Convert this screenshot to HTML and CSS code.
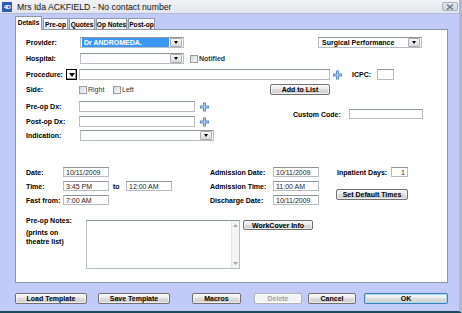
FILE: index.html
```html
<!DOCTYPE html>
<html>
<head>
<meta charset="utf-8">
<link rel="stylesheet" href="styles.css">
</head>
<body>
<div class="window">
  <div class="titlebar">
    <div class="app-icon">4D</div>
    <div class="title">Mrs Ida ACKFIELD - No contact number</div>
    <div class="close-btn"><svg width="8" height="6" viewBox="0 0 8 6"><path d="M1 0.5L7 5.5M7 0.5L1 5.5" stroke="#6b7280" stroke-width="1.4" fill="none"/></svg></div>
  </div>
  <div class="client">
    <div class="tabs">
      <div class="tab active t-details">Details</div>
      <div class="tab t-preop">Pre-op</div>
      <div class="tab t-quotes">Quotes</div>
      <div class="tab t-opnotes">Op Notes</div>
      <div class="tab t-postop">Post-op</div>
    </div>
    <div class="panel">
      <div class="row r-provider">
        <div class="label w54">Provider:</div>
        <div class="select w104">
          <div class="sel-value hl">Dr ANDROMEDA.</div>
          <div class="sel-arrow"><span class="tri"></span></div>
        </div>
        <div class="select w104 ml134">
          <div class="sel-value bold">Surgical Performance</div>
          <div class="sel-arrow"><span class="tri"></span></div>
        </div>
      </div>
      <div class="row r-hospital">
        <div class="label w54">Hospital:</div>
        <div class="select w104">
          <div class="sel-value"></div>
          <div class="sel-arrow"><span class="tri"></span></div>
        </div>
        <div class="cb ml6"></div>
        <div class="cb-text bold">Notified</div>
      </div>
      <div class="row r-procedure">
        <div class="label w40">Procedure:</div>
        <div class="dd-btn"><span class="tri"></span></div>
        <div class="field w251 ml2"></div>
        <svg class="plus ml3" width="9" height="10" viewBox="0 0 9 10"><path d="M3 0.5h3v3h3v3h-3v3h-3v-3h-3v-3h3z" fill="#5b8ccc"/><path d="M4 1.5h1v3h3v1h-3v3h-1v-3h-3v-1h3z" fill="#b5cff0"/></svg>
        <div class="label ml10 w25">ICPC:</div>
        <div class="field w17"></div>
      </div>
      <div class="row r-side">
        <div class="label w53">Side:</div>
        <div class="cb"></div>
        <div class="cb-text w25">Right</div>
        <div class="cb"></div>
        <div class="cb-text w148">Left</div>
        <div class="btn w60">Add to List</div>
      </div>
      <div class="dx-block">
        <div class="dx-left">
          <div class="row">
            <div class="label w53">Pre-op Dx:</div>
            <div class="field w116"></div>
            <svg class="plus ml5" width="9" height="10" viewBox="0 0 9 10"><path d="M3 0.5h3v3h3v3h-3v3h-3v-3h-3v-3h3z" fill="#5b8ccc"/><path d="M4 1.5h1v3h3v1h-3v3h-1v-3h-3v-1h3z" fill="#b5cff0"/></svg>
          </div>
          <div class="row mt4">
            <div class="label w53">Post-op Dx:</div>
            <div class="field w116"></div>
            <svg class="plus ml5" width="9" height="10" viewBox="0 0 9 10"><path d="M3 0.5h3v3h3v3h-3v3h-3v-3h-3v-3h3z" fill="#5b8ccc"/><path d="M4 1.5h1v3h3v1h-3v3h-1v-3h-3v-1h3z" fill="#b5cff0"/></svg>
          </div>
          <div class="row mt3">
            <div class="label w54">Indication:</div>
            <div class="select w134">
              <div class="sel-value"></div>
              <div class="sel-arrow"><span class="tri"></span></div>
            </div>
          </div>
        </div>
        <div class="custom">
          <div class="label w56">Custom Code:</div>
          <div class="field w74 h10"></div>
        </div>
      </div>
      <div class="dates">
        <div class="dcol c1">
          <div class="drow"><div class="label w37">Date:</div><div class="field w46 h10">10/11/2009</div></div>
          <div class="drow"><div class="label w37">Time:</div><div class="field w46 h10">3:45 PM</div><div class="label to">to</div><div class="field w46 h10">12:00 AM</div></div>
          <div class="drow"><div class="label w37">Fast from:</div><div class="field w46 h10">7:00 AM</div></div>
        </div>
        <div class="dcol c2">
          <div class="drow"><div class="label w63">Admission Date:</div><div class="field w46 h10">10/11/2009</div></div>
          <div class="drow"><div class="label w63">Admission Time:</div><div class="field w46 h10">11:00 AM</div></div>
          <div class="drow"><div class="label w63">Discharge Date:</div><div class="field w46 h10">10/11/2009</div></div>
        </div>
        <div class="dcol c3">
          <div class="drow"><div class="label w54">Inpatient Days:</div><div class="field w17 h10 right">1</div></div>
          <div class="btn w72 sdt">Set Default Times</div>
        </div>
      </div>
      <div class="notes-block">
        <div class="notes-label">
          <div class="label nl1">Pre-op Notes:</div>
          <div class="label">(prints on</div>
          <div class="label">theatre list)</div>
        </div>
        <div class="notes">
          <div class="notes-text"></div>
          <div class="sb">
            <svg width="5" height="3" viewBox="0 0 5 3"><path d="M0 3L2.5 0L5 3z" fill="#a8a8a8"/></svg>
            <svg width="5" height="3" viewBox="0 0 5 3"><path d="M0 0L2.5 3L5 0z" fill="#a8a8a8"/></svg>
          </div>
        </div>
        <div class="btn w70 wc">WorkCover Info</div>
      </div>
    </div>
    <div class="footer">
      <div class="btn b-load">Load Template</div>
      <div class="btn b-save">Save Template</div>
      <div class="btn b-macros">Macros</div>
      <div class="btn b-delete disabled">Delete</div>
      <div class="btn b-cancel">Cancel</div>
      <div class="btn b-ok default">OK</div>
    </div>
  </div>
</div>
</body>
</html>
```
FILE: styles.css
```css
* { box-sizing: border-box; }
html, body { margin: 0; padding: 0; }
body {
  width: 462px; height: 313px; overflow: hidden;
  font-family: "Liberation Sans", Arial, sans-serif;
  font-size: 7px; color: #000;
  background: #c3cbf7;
}
.window {
  width: 462px; height: 313px;
  display: flex; flex-direction: column;
  background: #c2caf8;
  border-right: 3px solid #b0b7d3;
  border-bottom: 2px solid #1d4a5b;
}
.titlebar {
  height: 14px; flex: none;
  display: flex; align-items: center;
  background: linear-gradient(#f1f2f5, #e2e5eb);
  border-bottom: 1px solid #b3bbdc;
  padding-left: 2px;
}
.app-icon {
  width: 10px; height: 10px;
  background: #2a5db8; color: #fff;
  font-size: 6px; font-weight: bold; line-height: 10px;
  text-align: center; letter-spacing: -0.5px;
}
.title { margin-left: 5px; font-size: 8.7px; color: #111; }
.close-btn {
  margin-left: auto; margin-right: 1px;
  width: 16px; height: 9px;
  border: 1px solid #a9b0bd; border-radius: 2px;
  background: linear-gradient(#e3e7ee, #cfd5df);
  display: flex; align-items: center; justify-content: center;
}
.client { padding-left: 15px; flex: 1; display: flex; flex-direction: column; }
.tabs { height: 15px; display: flex; align-items: flex-end; flex: none; }
.tab {
  height: 11px; margin-right: 1px;
  border: 1px solid #8e99aa; border-bottom: none;
  background: linear-gradient(#ffffff, #e9ebef);
  font-weight: bold; font-size: 6.6px; white-space: nowrap;
  display: flex; align-items: center; justify-content: center;
  border-radius: 1px 1px 0 0;
}
.tab.active {
  height: 14px; margin-bottom: -1px; position: relative; z-index: 1;
  background: #fff; padding-bottom: 2px;
}
.t-details { width: 27px; }
.t-preop { width: 25px; }
.t-quotes { width: 26px; }
.t-opnotes { width: 31px; }
.t-postop { width: 27px; }
.panel {
  width: 433px; height: 254px; flex: none;
  background: #fff; border: 1px solid #8d97a6;
  padding: 7px 0 0 10px;
}
.row { display: flex; align-items: center; height: 11px; }
.r-hospital { margin-top: 5px; }
.r-procedure { margin-top: 5px; }
.r-side { margin-top: 4px; }
.label { font-weight: bold; white-space: nowrap; flex: none; }
.bold { font-weight: bold; }
.w17 { width: 17px; } .w25 { width: 25px; } .w37 { width: 37px; } .w40 { width: 40px; }
.w46 { width: 46px; } .w53 { width: 53px; } .w54 { width: 54px; } .w56 { width: 56px; }
.w60 { width: 60px; } .w63 { width: 63px; } .w70 { width: 70px; } .w72 { width: 72px; }
.w74 { width: 74px; } .w104 { width: 104px; } .w116 { width: 116px; } .w134 { width: 134px; }
.w148 { width: 148px; } .w251 { width: 251px; }
.ml2 { margin-left: 2px; } .ml3 { margin-left: 3px; } .ml5 { margin-left: 5px; }
.ml6 { margin-left: 6px; } .ml10 { margin-left: 10px; } .ml134 { margin-left: 134px; }
.mt3 { margin-top: 3px; } .mt4 { margin-top: 4px; }
.h10 { height: 10px !important; }
.field {
  height: 11px; flex: none; background: #fff;
  border: 1px solid #b8bcc4; border-top-color: #8f939a;
  padding-left: 2px; display: flex; align-items: center;
  white-space: nowrap; color: #222;
}
.field.right { justify-content: flex-end; padding-right: 2px; }
.select {
  height: 11px; flex: none; display: flex; align-items: center;
  background: #fff; border: 1px solid #b8bcc4; border-top-color: #8f939a;
  padding: 0 1px;
}
.sel-value { flex: 1; height: 7px; line-height: 7px; padding-left: 2px; white-space: nowrap; }
.sel-value.hl { background: #3d98f5; color: #fff; font-weight: bold; height: 9px; line-height: 9px; margin-right: 1px; }
.sel-arrow {
  width: 12px; height: 9px; flex: none;
  border: 1px solid #a9acb2; border-radius: 1px;
  background: linear-gradient(#f7f7f7, #dadada);
  display: flex; align-items: center; justify-content: center;
}
.tri {
  width: 0; height: 0;
  border-left: 2.5px solid transparent; border-right: 2.5px solid transparent;
  border-top: 3px solid #000;
}
.dd-btn {
  width: 11px; height: 11px; flex: none;
  border: 1px solid #000; background: #fff;
  box-shadow: inset -1px -1px 0 #9a9a9a;
  display: flex; align-items: center; justify-content: center;
}
.dd-btn .tri { border-left-width: 3px; border-right-width: 3px; border-top-width: 4px; }
.plus { flex: none; display: block; }
.cb {
  width: 8px; height: 8px; flex: none;
  border: 1px solid #9a9da3;
  background: linear-gradient(135deg, #d8d9dc, #f7f7f8);
}
.cb-text { margin-left: 1px; white-space: nowrap; color: #333; }
.btn {
  height: 11px; flex: none;
  border: 1px solid #707070; border-radius: 2px;
  background: linear-gradient(#f6f6f6, #ebebeb 45%, #dcdcdc 50%, #cfcfcf);
  font-weight: bold; white-space: nowrap;
  display: flex; align-items: center; justify-content: center;
  box-shadow: inset 0 0 0 1px rgba(255,255,255,0.6);
}
.btn.disabled { color: #a0a0a0; border-color: #adb2b5; background: #f4f4f4; }
.btn.default { border-color: #3c7fb1; box-shadow: inset 0 0 0 1px #a9dcf5; }
.dx-block { display: flex; margin-top: 6px; }
.dx-left { width: 200px; display: flex; flex-direction: column; }
.custom { display: flex; align-items: center; margin-top: 8px; margin-left: 67px; height: 10px; }
.dates { display: flex; margin-top: 26px; }
.dcol { display: flex; flex-direction: column; gap: 4px; }
.c1 { width: 184px; }
.c2 { width: 127px; }
.drow { display: flex; align-items: center; height: 10px; }
.to { margin-left: 4px; width: 13px; }
.sdt { margin-top: 8px; margin-left: -1px; }
.notes-block { display: flex; align-items: flex-start; margin-top: 11px; }
.notes-label { width: 60px; flex: none; line-height: 9px; }
.nl1 { margin-bottom: 3px; }
.notes {
  width: 154px; height: 49px; flex: none; margin-top: 4px;
  border: 1px solid #b8bcc4; border-top-color: #8f939a;
  display: flex;
}
.notes-text { flex: 1; }
.sb {
  width: 8px; background: #f4f4f4; border-left: 1px solid #e6e6e6;
  display: flex; flex-direction: column; justify-content: space-between; align-items: center;
  padding: 3px 0;
}
.sb svg { display: block; }
.wc { margin-left: 3px; margin-top: 4px; height: 10px; }
.footer { display: flex; margin-top: 10px; height: 11px; }
.b-load { width: 72px; }
.b-save { width: 72px; margin-left: 11px; }
.b-macros { width: 49px; margin-left: 22px; }
.b-delete { width: 48px; margin-left: 13px; }
.b-cancel { width: 48px; margin-left: 6px; }
.b-ok { width: 84px; margin-left: 8px; }
```
